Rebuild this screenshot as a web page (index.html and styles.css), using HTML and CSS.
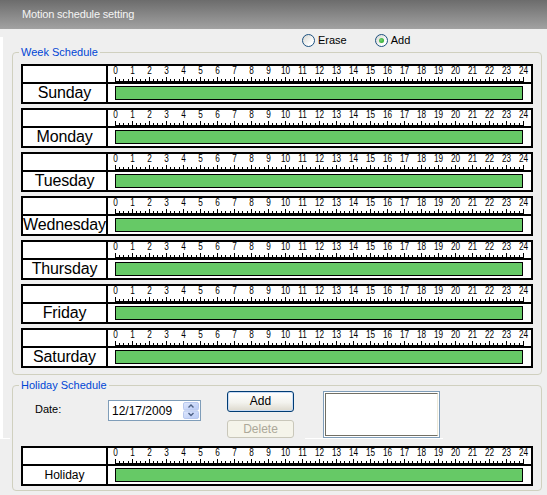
FILE: index.html
```html
<!DOCTYPE html>
<html>
<head>
<meta charset="utf-8">
<title>Motion schedule setting</title>
<link rel="stylesheet" href="styles.css">
</head>
<body>
<div class="titlebar">Motion schedule setting</div>
<div class="modes">
  <label class="radio"><i></i>Erase</label>
  <label class="radio on"><i></i>Add</label>
</div>
<fieldset class="group week">
  <legend>Week Schedule</legend>
  <div class="rows">
    <div class="sched">
      <div></div>
      <div class="ruler"><div class="nums"><span>0</span><span>1</span><span>2</span><span>3</span><span>4</span><span>5</span><span>6</span><span>7</span><span>8</span><span>9</span><span>10</span><span>11</span><span>12</span><span>13</span><span>14</span><span>15</span><span>16</span><span>17</span><span>18</span><span>19</span><span>20</span><span>21</span><span>22</span><span>23</span><span>24</span></div><div class="ticks"></div></div>
      <div class="label">Sunday</div>
      <div class="bar-cell"><div class="bar"></div></div>
    </div>
    <div class="sched">
      <div></div>
      <div class="ruler"><div class="nums"><span>0</span><span>1</span><span>2</span><span>3</span><span>4</span><span>5</span><span>6</span><span>7</span><span>8</span><span>9</span><span>10</span><span>11</span><span>12</span><span>13</span><span>14</span><span>15</span><span>16</span><span>17</span><span>18</span><span>19</span><span>20</span><span>21</span><span>22</span><span>23</span><span>24</span></div><div class="ticks"></div></div>
      <div class="label">Monday</div>
      <div class="bar-cell"><div class="bar"></div></div>
    </div>
    <div class="sched">
      <div></div>
      <div class="ruler"><div class="nums"><span>0</span><span>1</span><span>2</span><span>3</span><span>4</span><span>5</span><span>6</span><span>7</span><span>8</span><span>9</span><span>10</span><span>11</span><span>12</span><span>13</span><span>14</span><span>15</span><span>16</span><span>17</span><span>18</span><span>19</span><span>20</span><span>21</span><span>22</span><span>23</span><span>24</span></div><div class="ticks"></div></div>
      <div class="label">Tuesday</div>
      <div class="bar-cell"><div class="bar"></div></div>
    </div>
    <div class="sched">
      <div></div>
      <div class="ruler"><div class="nums"><span>0</span><span>1</span><span>2</span><span>3</span><span>4</span><span>5</span><span>6</span><span>7</span><span>8</span><span>9</span><span>10</span><span>11</span><span>12</span><span>13</span><span>14</span><span>15</span><span>16</span><span>17</span><span>18</span><span>19</span><span>20</span><span>21</span><span>22</span><span>23</span><span>24</span></div><div class="ticks"></div></div>
      <div class="label">Wednesday</div>
      <div class="bar-cell"><div class="bar"></div></div>
    </div>
    <div class="sched">
      <div></div>
      <div class="ruler"><div class="nums"><span>0</span><span>1</span><span>2</span><span>3</span><span>4</span><span>5</span><span>6</span><span>7</span><span>8</span><span>9</span><span>10</span><span>11</span><span>12</span><span>13</span><span>14</span><span>15</span><span>16</span><span>17</span><span>18</span><span>19</span><span>20</span><span>21</span><span>22</span><span>23</span><span>24</span></div><div class="ticks"></div></div>
      <div class="label">Thursday</div>
      <div class="bar-cell"><div class="bar"></div></div>
    </div>
    <div class="sched">
      <div></div>
      <div class="ruler"><div class="nums"><span>0</span><span>1</span><span>2</span><span>3</span><span>4</span><span>5</span><span>6</span><span>7</span><span>8</span><span>9</span><span>10</span><span>11</span><span>12</span><span>13</span><span>14</span><span>15</span><span>16</span><span>17</span><span>18</span><span>19</span><span>20</span><span>21</span><span>22</span><span>23</span><span>24</span></div><div class="ticks"></div></div>
      <div class="label">Friday</div>
      <div class="bar-cell"><div class="bar"></div></div>
    </div>
    <div class="sched">
      <div></div>
      <div class="ruler"><div class="nums"><span>0</span><span>1</span><span>2</span><span>3</span><span>4</span><span>5</span><span>6</span><span>7</span><span>8</span><span>9</span><span>10</span><span>11</span><span>12</span><span>13</span><span>14</span><span>15</span><span>16</span><span>17</span><span>18</span><span>19</span><span>20</span><span>21</span><span>22</span><span>23</span><span>24</span></div><div class="ticks"></div></div>
      <div class="label">Saturday</div>
      <div class="bar-cell"><div class="bar"></div></div>
    </div>
  </div>
</fieldset>
<fieldset class="group holiday">
  <legend>Holiday Schedule</legend>
  <div class="hctrl">
    <div class="date-label">Date:</div>
    <div class="date">
      <span>12/17/2009</span>
      <svg class="spin" width="16" height="17" viewBox="0 0 16 17">
        <defs>
          <linearGradient id="sg" x1="0" y1="0" x2="1" y2="1">
            <stop offset="0" stop-color="#dfe8fd"/>
            <stop offset="1" stop-color="#b7c9f5"/>
          </linearGradient>
        </defs>
        <rect x="0.5" y="0.5" width="15" height="7.5" rx="1.5" fill="url(#sg)" stroke="#b8c8ee"/>
        <rect x="0.5" y="9" width="15" height="7.5" rx="1.5" fill="url(#sg)" stroke="#b8c8ee"/>
        <path d="M5.5 5.5 L8 3 L10.5 5.5" fill="none" stroke="#4d6185" stroke-width="1.4"/>
        <path d="M5.5 11 L8 13.5 L10.5 11" fill="none" stroke="#4d6185" stroke-width="1.4"/>
      </svg>
    </div>
    <div class="btns">
      <div class="btn">Add</div>
      <div class="btn dis">Delete</div>
    </div>
    <div class="listwrap"><div class="list"><div class="list-in"></div></div></div>
  </div>
  <div class="sched hrow">
    <div></div>
    <div class="ruler"><div class="nums"><span>0</span><span>1</span><span>2</span><span>3</span><span>4</span><span>5</span><span>6</span><span>7</span><span>8</span><span>9</span><span>10</span><span>11</span><span>12</span><span>13</span><span>14</span><span>15</span><span>16</span><span>17</span><span>18</span><span>19</span><span>20</span><span>21</span><span>22</span><span>23</span><span>24</span></div><div class="ticks"></div></div>
    <div class="label small">Holiday</div>
    <div class="bar-cell"><div class="bar"></div></div>
  </div>
</fieldset>
</body>
</html>
```
FILE: styles.css
```css
* { box-sizing: border-box; }
html, body { margin: 0; }
body {
  width: 547px;
  height: 495px;
  overflow: hidden;
  font-family: "Liberation Sans", Arial, sans-serif;
  font-size: 11px;
  color: #000;
  background:
    linear-gradient(#fff, #fff) 0 37px / 3px 401px no-repeat,
    linear-gradient(#fff, #fff) 0 438px / 10px 1px no-repeat,
    #efefef;
}
.titlebar {
  height: 29px;
  line-height: 29px;
  padding-left: 22px;
  color: #f4f4f4;
  font-size: 11px;
  letter-spacing: -0.15px;
  background: linear-gradient(#6c6c6c, #a2a2a2);
}
.modes {
  height: 17px;
  padding: 5px 0 0 302px;
  display: flex;
}
.radio {
  display: flex;
  align-items: center;
  gap: 3px;
  height: 13px;
  line-height: 13px;
  margin-right: 28px;
}
.radio i {
  position: relative;
  width: 13px;
  height: 13px;
  border: 1px solid #1c5180;
  border-radius: 50%;
  background: linear-gradient(135deg, #d6d6d0, #fff 75%);
}
.radio.on i::after {
  content: "";
  position: absolute;
  left: 3px;
  top: 3px;
  width: 5px;
  height: 5px;
  border-radius: 50%;
  background: radial-gradient(circle at 40% 40%, #6fd26f, #21a121);
}
.group {
  margin: 0 0 0 12px;
  width: 530px;
  min-width: 0;
  border: 1px solid #d0d0bf;
  border-radius: 4px;
  padding: 0 8px 6px;
}
.group legend {
  padding: 0 2px;
  margin-left: -2px;
  color: #0046d5;
  font-size: 11px;
  line-height: 13px;
}
.holiday {
  margin-top: 4px;
  padding-bottom: 4px;
}
.rows {
  display: flex;
  flex-direction: column;
  gap: 4px;
  padding-top: 5px;
}
.sched {
  display: grid;
  grid-template-columns: 83px 423px;
  grid-template-rows: 16px 18px;
  gap: 2px;
  width: 512px;
  background: #000;
  border: 2px solid #000;
}
.sched > div { background: #fff; }
.label {
  font-size: 16px;
  line-height: 18px;
  text-align: center;
  white-space: nowrap;
  letter-spacing: -0.15px;
}
.label.small { font-size: 12px; letter-spacing: 0; }
.ruler { padding-left: 7px; }
.nums {
  display: grid;
  grid-template-columns: repeat(25, 17px);
  margin-left: -8px;
  height: 11px;
  font-size: 10px;
  line-height: 10px;
}
.nums span {
  text-align: center;
  transform: scaleX(0.82);
}
.ticks {
  width: 409px;
  height: 5px;
  background:
    linear-gradient(#000, #000) left bottom / 100% 1px no-repeat,
    repeating-linear-gradient(90deg, #000 0 1px, transparent 1px 17px) left bottom / 100% 5px no-repeat,
    repeating-linear-gradient(90deg, transparent 0 4px, #000 4px 5px, transparent 5px 8px, #000 8px 9px, transparent 9px 13px, #000 13px 14px, transparent 14px 17px) left bottom / 100% 3px no-repeat;
}
.bar-cell { padding: 2px 0 2px 7px; }
.bar {
  width: 408px;
  height: 14px;
  background: #66c966;
  border: 1px solid #000;
}
.hctrl {
  display: flex;
  align-items: flex-start;
  height: 48px;
  margin-top: -1px;
  padding-left: 14px;
}
.date-label {
  width: 73px;
  margin-top: 11px;
  line-height: 14px;
}
.date {
  display: flex;
  align-items: center;
  justify-content: space-between;
  width: 93px;
  height: 21px;
  margin-top: 9px;
  padding: 0 1px 0 3px;
  border: 1px solid #7f9db9;
  background: #fff;
  font-size: 12px;
}
.spin { display: block; }
.btns {
  display: flex;
  flex-direction: column;
  gap: 8px;
  width: 67px;
  margin-left: 26px;
}
.btn {
  height: 21px;
  line-height: 19px;
  text-align: center;
  font-size: 12px;
  border: 1px solid #003c74;
  border-radius: 3px;
  background: linear-gradient(#ffffff, #f3f3ee 55%, #dcd8cc);
  box-shadow: inset 0 0 0 1px #c9dbf4;
}
.btn.dis {
  height: 18px;
  line-height: 16px;
  color: #aca899;
  border-color: #c9c7ba;
  background: #f5f4ea;
  box-shadow: none;
}
.listwrap {
  margin-left: 11px;
  padding: 0 3px 0 18px;
  border-bottom: 1px solid #fff;
}
.list {
  width: 117px;
  height: 47px;
  padding: 1px;
  border: 1px solid #7f9db9;
  background: #fff;
}
.list-in {
  height: 100%;
  border: 1px solid #716f64;
  border-right-color: #ece9d8;
}
.hrow { margin-top: 7px; }
```
